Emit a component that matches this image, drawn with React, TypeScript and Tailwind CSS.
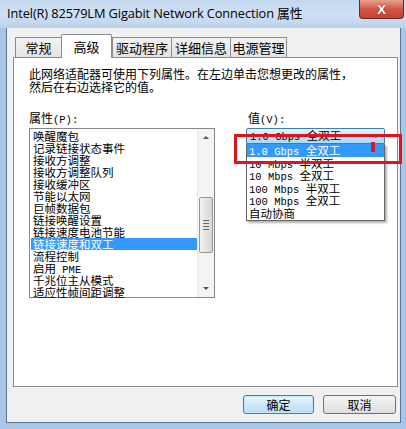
import React from 'react';

const cjk = '"Noto Sans CJK SC", "Noto Sans", sans-serif';

// SimSun-like: narrow latin, full-width CJK
function Mixed({ text }: { text: string }) {
    const parts = text.split(/([\x20-\x7e]+)/).filter(Boolean);
    return (
        <>
            {parts.map((p, i) =>
                /^[\x20-\x7e]+$/.test(p) ? (
                    <span key={i} className="text-[10.5px] font-['Liberation_Mono',monospace] whitespace-pre">
                        {p}
                    </span>
                ) : (
                    <span key={i}>{p}</span>
                )
            )}
        </>
    );
}

const props = [
    '唤醒魔包',
    '记录链接状态事件',
    '接收方调整',
    '接收方调整队列',
    '接收缓冲区',
    '节能以太网',
    '巨帧数据包',
    '链接唤醒设置',
    '链接速度电池节能',
    '链接速度和双工',
    '流程控制',
    '启用 PME',
    '千兆位主从模式',
    '适应性帧间距调整',
];

const values = ['1.0 Gbps 全双工', '10 Mbps 半双工', '10 Mbps 全双工', '100 Mbps 半双工', '100 Mbps 全双工', '自动协商'];

const tabs = [
    { label: '常规', w: 'w-[46px]' },
    { label: '高级', w: 'w-[51px]', active: true },
    { label: '驱动程序', w: 'w-[59px]' },
    { label: '详细信息', w: 'w-[59px]' },
    { label: '电源管理', w: 'w-[57px]' },
];

function Tab({ label, w, active }: { label: string; w: string; active?: boolean }) {
    return active ? (
        <div
            className={`${w} h-[24px] -mb-px relative z-10 flex items-start justify-center pt-[2px] bg-white border border-b-0 border-[#898c95] rounded-t-[2px] text-[13px] text-black`}
        >
            {label}
        </div>
    ) : (
        <div
            className={`${w} h-[20px] flex items-center justify-center bg-gradient-to-b from-[#f3f3f3] to-[#e3e3e3] border border-b-0 border-[#898c95] border-r-0 last:border-r text-[13px] text-black`}
        >
            {label}
        </div>
    );
}

function ScrollBar() {
    return (
        <div className="w-[17px] h-full flex flex-col bg-[#f4f4f4] border-l border-[#e6e6e6]">
            <div className="h-[17px] flex items-center justify-center">
                <div className="w-0 h-0 border-x-[3px] border-x-transparent border-b-[3px] border-b-[#555]" />
            </div>
            <div className="h-[51px]" />
            <div className="mx-[1px] h-[56px] rounded-[2px] border border-[#979797] bg-gradient-to-r from-[#f2f2f2] to-[#d6d6d6] flex flex-col items-center justify-center gap-[2px]">
                <div className="w-[6px] h-px bg-[#666]" />
                <div className="w-[6px] h-px bg-[#666]" />
                <div className="w-[6px] h-px bg-[#666]" />
                <div className="w-[6px] h-px bg-[#666]" />
            </div>
            <div className="flex-1" />
            <div className="h-[17px] flex items-center justify-center">
                <div className="w-0 h-0 border-x-[3px] border-x-transparent border-t-[3px] border-t-[#555]" />
            </div>
        </div>
    );
}

export default function App() {
    return (
        <div className="w-[406px] h-[429px] relative overflow-hidden bg-[#a8c7e8] flex flex-col" style={{ fontFamily: cjk }}>
            {/* Title bar */}
            <div className="h-[28px] shrink-0 flex items-center pl-[7px] bg-gradient-to-b from-[#c2d7ee] via-[#cfe0f2] to-[#bcd3ec] relative">
                <span className="text-[12.8px] text-black font-['Open_Sans','Noto_Sans_CJK_SC',sans-serif] tracking-[-0.1px]">
                    Intel(R) 82579LM Gigabit Network Connection 属性
                </span>
                <div className="absolute right-[2px] top-0 w-[45px] h-[19px] rounded-b-[4px] border border-t-0 border-[#6d2a1e] bg-gradient-to-b from-[#e8a090] via-[#d0584a] to-[#c8402c] flex items-center justify-center">
                    <span className="text-white text-[13px] font-bold font-['Liberation_Sans',sans-serif] leading-none [text-shadow:0_0_2px_#6a1a10]">
                        X
                    </span>
                </div>
            </div>

            {/* Dialog body */}
            <div className="flex-1 ml-[6px] mr-[5px] mb-[6px] bg-[#f0f0f0] border-l border-b border-r border-[#5d7590] flex flex-col px-[6px] pt-[5px]">
                {/* Tabs */}
                <div className="flex items-end h-[24px] pl-[2px]">
                    {tabs.map((t) => (
                        <Tab key={t.label} {...t} />
                    ))}
                </div>

                {/* Panel */}
                <div className="w-[385px] h-[330px] bg-white border border-[#898c95] flex flex-col pl-[15px] pt-[9px] text-[11.5px] leading-[12px] text-black">
                    <p className="leading-[13px] text-[12px]">
                        此网络适配器可使用下列属性。在左边单击您想更改的属性，
                        <br />
                        然后在右边选择它的值。
                    </p>

                    <div className="flex mt-[19px]">
                        {/* Left column */}
                        <div className="flex flex-col">
                            <div className="h-[14px] mb-[2px] text-[12px]">
                                属性<Mixed text="(P):" />
                            </div>
                            <div className="w-[186px] h-[170px] border border-[#828790] flex bg-white">
                                <div className="flex-1 flex flex-col pt-[1px] pl-[1px]">
                                    {props.map((p) => (
                                        <div
                                            key={p}
                                            className={`h-[12px] leading-[12px] pl-[2px] whitespace-nowrap ${
                                                p === '链接速度和双工' ? 'bg-[#3399ff] text-white' : ''
                                            }`}
                                        >
                                            <Mixed text={p} />
                                        </div>
                                    ))}
                                </div>
                                <ScrollBar />
                            </div>
                        </div>

                        {/* Right column */}
                        <div className="flex flex-col ml-[31px]">
                            <div className="h-[14px] mb-[2px] ml-[2px] text-[12px]">
                                值<Mixed text="(V):" />
                            </div>
                            <div className="w-[139px] h-[16px] rounded-t-[2px] border border-[#3c7fb1] bg-gradient-to-b from-[#eaf6fd] via-[#bee6fd] to-[#a7d9f5] flex items-center pl-[3px]">
                                <span className="flex-1 whitespace-nowrap">
                                    <Mixed text="1.0 Gbps 全双工" />
                                </span>
                                <div className="w-0 h-0 mr-[5px] border-x-[3.5px] border-x-transparent border-t-[4px] border-t-black" />
                            </div>
                            <div className="w-[139px] bg-white border border-[#646464] border-t-0 shadow-[2px_2px_2px_rgba(0,0,0,0.3)] flex flex-col pb-[1px]">
                                {values.map((v, i) => (
                                    <div
                                        key={v}
                                        className={`h-[12.5px] leading-[12px] pl-[2px] whitespace-nowrap ${
                                            i === 0 ? 'bg-[#3399ff] text-white' : ''
                                        }`}
                                    >
                                        <Mixed text={v} />
                                    </div>
                                ))}
                            </div>
                        </div>
                    </div>
                </div>

                {/* Buttons */}
                <div className="flex justify-end gap-[9px] mt-[8px] mr-[-2px]">
                    <button className="w-[71px] h-[19px] rounded-[3px] border border-[#3c7fb1] bg-gradient-to-b from-[#eaf6fd] to-[#b4dcf4] text-[12px] leading-none text-black shadow-[inset_0_0_0_1px_#c0e6fb]">
                        确定
                    </button>
                    <button className="w-[73px] h-[19px] rounded-[3px] border border-[#707070] bg-gradient-to-b from-[#f6f6f6] to-[#dddddd] text-[12px] leading-none text-black">
                        取消
                    </button>
                </div>
            </div>

            {/* Annotation overlay */}
            <div className="absolute left-[234px] top-[134px] w-[168px] h-[30px] border-[3px] border-[#e0141c] pointer-events-none" />
            <div className="absolute left-[371px] top-[142px] w-[4px] h-[10px] bg-[#e0141c]" />
        </div>
    );
}
